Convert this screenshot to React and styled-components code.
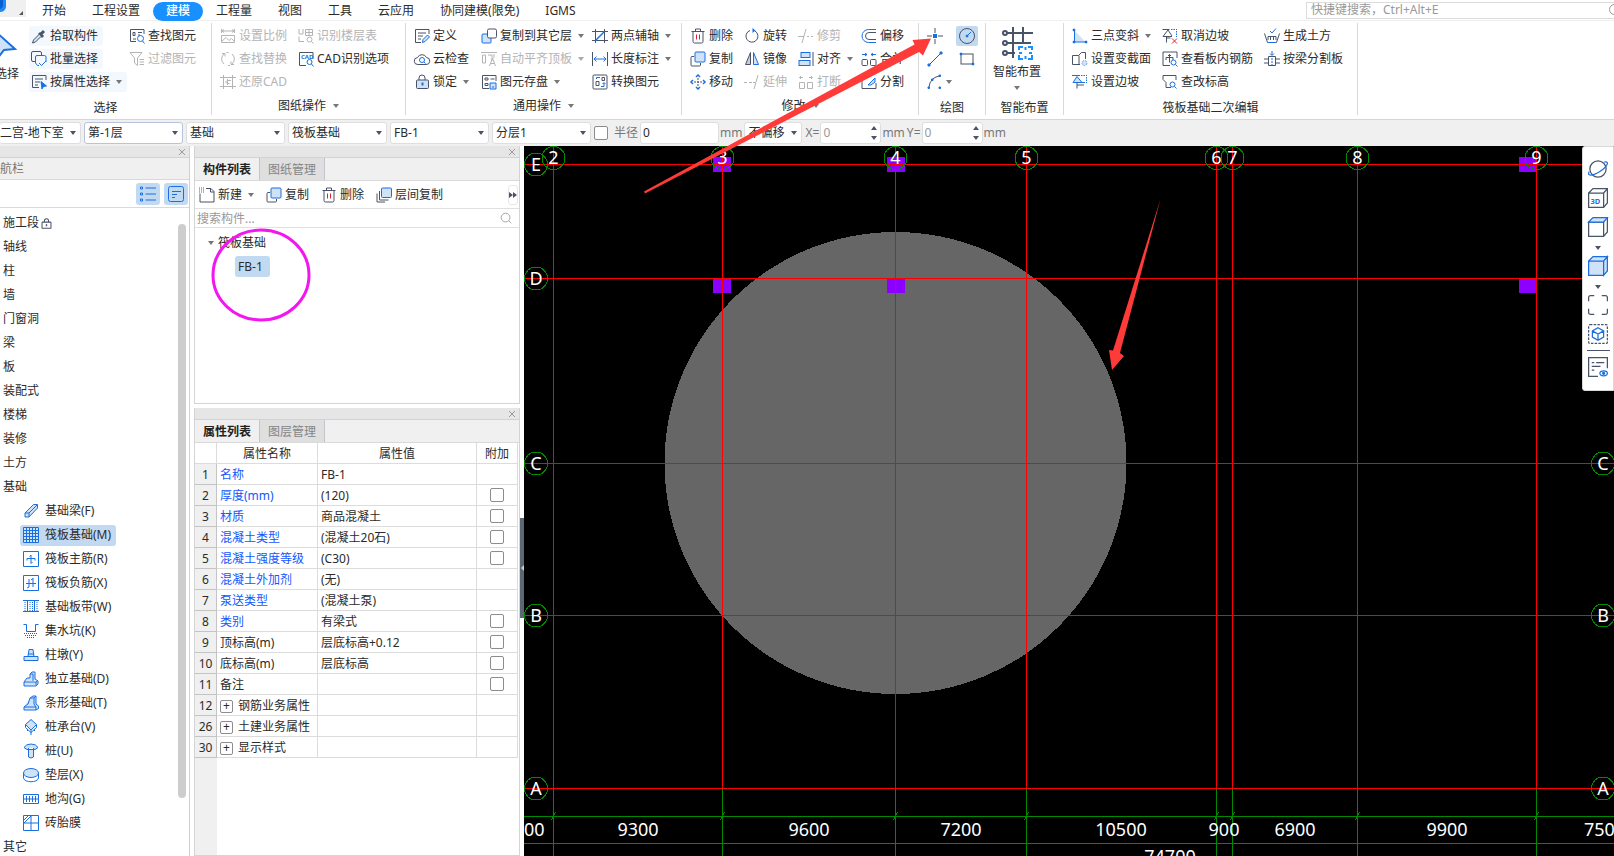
import React, { useState } from "react";
import styled, { createGlobalStyle, css } from "styled-components";

const DARK = "#4a5368";
const BLUE = "#1a6fe0";
const LIGHT = "#cfe2f8";
const GREY = "#b4b4b4";

const GlobalStyle = createGlobalStyle`
  * {
    box-sizing: border-box;
  }
  body {
    margin: 0;
    overflow: hidden;
    background: #fff;
  }
  body, button, input, select, table {
    font-family: "Noto Sans", "Noto Sans CJK SC", sans-serif;
    font-size: 12px;
    line-height: 18px;
    color: #2b2b2b;
  }
`;

/* ---------- icons, all on a 16 x 16 grid ---------- */

const icons = {
  pick: (
    <>
      <path d="M8 5l4 4M9.5 6.5l3.5-3.5" strokeWidth="3" />
      <path d="M8 6.5L2.5 12l-1 3 3-1L10 8.5" stroke={DARK} fill={LIGHT} />
    </>
  ),
  batch: (
    <>
      <path d="M4 10.5H2A1.5 1.5 0 0 1 .5 9V2A1.5 1.5 0 0 1 2 .5h7A1.5 1.5 0 0 1 10.5 2v2" />
      <path d="M8 14.5H6.5L4.5 12V6A1.5 1.5 0 0 1 6 4.5h7.5A1.5 1.5 0 0 1 15 6v5M8 12l2.5 2.5L15 10" stroke={BLUE} />
    </>
  ),
  attr: (
    <>
      <path d="M15 6V1.5H1.5v12H8M4 5h8M4 8h5M4 11h3" />
      <path d="M10 7.5l5.5 4.5-3 .5-1.5 2.5z" fill={BLUE} stroke={BLUE} />
    </>
  ),
  find: (
    <>
      <path d="M15 6V1.5H1.5v12H7M4 4.5h2v3H4zM9 4.5h4M9 7h2M4 11h3" />
      <circle cx="11.5" cy="10.5" r="3" stroke={BLUE} />
      <path d="M13.5 13l2 2.5" stroke={BLUE} />
    </>
  ),
  filter: <path d="M1 1.5h12L8.5 7v7.5L5.5 12V7zM10.5 8.5H15M10.5 11H15M10.5 13.5H15" />,
  scale: <path d="M1.5 1v4M14.5 1v4M1.5 3h13M4 1.5L2 3l2 1.5M12 1.5L14 3l-2 1.5M1.5 7.5h13v7H1.5zM2 13l4-3.5 3 3 2.5-2 3 3" />,
  floorTable: (
    <>
      <path d="M1 1v5h4V1M1 8.5v5h5M7.5 1.5h7v6h-7zM7.5 4.5h7M11 1.5v6" />
      <circle cx="11.5" cy="11.5" r="2.5" />
      <path d="M13.5 13.5l2 2" />
    </>
  ),
  replace: <path d="M4 13A6.5 6.5 0 0 1 4 3M2 2.5h3v3M12 3a6.5 6.5 0 0 1 0 10M14 13.5h-3v-3M6.5 1.5h2M8 14.5h2" />,
  cad: (
    <>
      <path d="M15 8V1.5H1.5v13H8" />
      <text x="3" y="8" fontSize="6" fontWeight="700" fill={BLUE} stroke="none">CAD</text>
      <circle cx="11.5" cy="11" r="2.5" stroke={BLUE} />
      <path d="M13.5 13l2 2.5" stroke={BLUE} />
    </>
  ),
  restore: <path d="M3.5 1v14M12.5 1v14M0 3.5h16M0 12.5h16M11 6.5H7L5.5 8 7 9.5h2.5M7.5 5v6" />,
  define: (
    <>
      <path d="M15 6V1.5H1.5v13H7M4 5h8M4 8h5M4 11h3" />
      <path d="M8.5 14.5l.5-3 4.5-4.5 2 2L11 13.5z" fill={LIGHT} stroke={BLUE} />
    </>
  ),
  cloud: (
    <>
      <path d="M4 13.5A3.5 3.5 0 0 1 3.5 6.5 5 5 0 0 1 12.5 6.5 3.5 3.5 0 0 1 12 13.5z" />
      <circle cx="8" cy="9" r="2.5" stroke={BLUE} />
      <path d="M10 11l1.5 1.5" stroke={BLUE} />
    </>
  ),
  lock: (
    <>
      <path d="M5 6V4a3 3 0 0 1 6 0v2" />
      <rect x="2.5" y="6" width="12" height="8.5" rx="1" fill={LIGHT} />
      <path d="M8.5 8.5v3" stroke={BLUE} strokeWidth="2" />
    </>
  ),
  stageLock: (
    <>
      <path d="M5 6V4a3 3 0 0 1 6 0v2" strokeWidth="1.5" />
      <rect x="1.5" y="6" width="13" height="9" rx="1" fill="#fff" strokeWidth="1.5" />
      <path d="M8 9v3" strokeWidth="2" />
    </>
  ),
  copyLayer: (
    <>
      <rect x="1" y="6" width="9" height="9" rx="1" fill={LIGHT} stroke={BLUE} />
      <rect x="6.5" y="1" width="9" height="9" rx="1.5" fill="#fff" />
    </>
  ),
  alignTop: <path d="M0 1.5h16M1.5 4h3v8h-3zM7 4h4v6M13 3v4M8.5 15l3-8 3 8M10 12.5h3" />,
  store: (
    <>
      <path d="M15 7V1.5H1.5v13H8M4 4h3v2H4zM4 9.5h3v2H4zM9.5 5h4" />
      <path d="M9 9h6v6H9zM11 13h2" fill={LIGHT} stroke={BLUE} />
    </>
  ),
  twoPoint: (
    <>
      <path d="M3.5 1v14M12.5 1v14M0 3.5h16M0 12.5h16" />
      <path d="M3.5 12.5l9-9" stroke={BLUE} strokeWidth="1.5" />
    </>
  ),
  length: (
    <>
      <path d="M.5 1v14M15.5 1v14" />
      <path d="M2 8h12M4.5 5.5L2 8l2.5 2.5M11.5 5.5L14 8l-2.5 2.5" stroke={BLUE} />
    </>
  ),
  convert: (
    <>
      <rect x="1" y="1" width="14" height="14" rx="1" />
      <path d="M4 7.5h3v4H4zM10 3.5h2.5v3H10z" />
      <path d="M4.5 5V3.5H8M9 12.5h3V9M10.5 10L12 8.5l1.5 1.5" stroke={BLUE} />
    </>
  ),
  trash: (
    <>
      <path d="M1.5 3.5h13M5.5 3V1h5v2M3 4v9.5A1.5 1.5 0 0 0 4.5 15h7a1.5 1.5 0 0 0 1.5-1.5V4" />
      <path d="M6.5 6.5v5M9.5 6.5v5" stroke="#d9262c" />
    </>
  ),
  copy: (
    <>
      <path d="M4 5.5H2A1 1 0 0 0 1 6.5V14a1 1 0 0 0 1 1h7.5a1 1 0 0 0 1-1v-2" />
      <rect x="5" y="1" width="10" height="10" rx="1" fill={LIGHT} stroke={BLUE} />
    </>
  ),
  copyFloors: (
    <>
      <path d="M3.5 4v9h9M1 6.5V15h8" />
      <rect x="5.5" y="1" width="10" height="9.5" rx="1" fill={LIGHT} stroke={BLUE} />
    </>
  ),
  move: (
    <>
      <path d="M8 4v8M4 8h8" strokeDasharray="2 1" />
      <path d="M6 3l2-2 2 2M6 13l2 2 2-2M3 6L1 8l2 2M13 6l2 2-2 2" stroke={BLUE} strokeWidth="1.5" />
    </>
  ),
  rotate: (
    <>
      <path d="M6 2.5A6 6 0 1 0 11 3" />
      <path d="M8.5 0l3 2.5-3 2.5z" fill={BLUE} stroke="none" />
    </>
  ),
  mirror: (
    <>
      <path d="M6.5 1.5v12h-5z" fill="#ccc" />
      <path d="M9.5 1.5v12h5z" fill={LIGHT} stroke={BLUE} />
    </>
  ),
  trim: <path d="M0 8.5h6M4 15L8 1M9 8.5h2M13 8.5h2" />,
  extend: <path d="M0 8.5h3M5 8.5h3M9 8.5h2M10 15l4-14" />,
  align: (
    <>
      <path d="M15 1v14" />
      <rect x="3" y="1.5" width="9" height="5" fill={LIGHT} stroke={BLUE} />
      <rect x="1" y="9.5" width="11" height="5" fill={LIGHT} stroke={BLUE} />
    </>
  ),
  split2: <path d="M1.5 8.5h5v6h-5zM9.5 8.5h5v6h-5zM5 3.5H1.5M3 2L1.5 3.5 3 5M11 3.5h3.5M13 2l1.5 1.5L13 5" />,
  offset: (
    <>
      <path d="M15 4.5H8a3.5 3.5 0 0 0 0 7h7" />
      <path d="M15 1.5H7.5a6.5 6.5 0 0 0 0 13H15" stroke={BLUE} />
    </>
  ),
  merge: (
    <>
      <rect x="1" y="8.5" width="5.5" height="6" rx="1" />
      <rect x="9.5" y="8.5" width="5.5" height="6" rx="1" />
      <path d="M1 3.5h5M4 2l2 1.5L4 5M15 3.5h-5M12 2l-2 1.5L12 5" stroke={BLUE} />
    </>
  ),
  divide: (
    <>
      <path d="M8 3.5H1v11h14V9" />
      <path d="M7 11l7-7v4l-4 3z" fill={LIGHT} stroke={BLUE} />
    </>
  ),
  point: (
    <>
      <path d="M8 0v5M8 11v5M0 8h5M11 8h5" />
      <rect x="6" y="6" width="4" height="4" fill={BLUE} stroke="none" />
    </>
  ),
  circle: (
    <>
      <circle cx="8" cy="8" r="7.5" />
      <path d="M8 8l4-4" stroke={BLUE} />
      <circle cx="8" cy="8" r="1" fill={BLUE} stroke={BLUE} />
    </>
  ),
  line: (
    <>
      <path d="M3 13L13 3" />
      <path d="M1 13h2v2H1zM13 1h2v2h-2z" fill={BLUE} stroke={BLUE} />
    </>
  ),
  rect: (
    <>
      <rect x="2" y="3" width="12" height="10" />
      <path d="M1 2h2v2H1zM13 12h2v2h-2z" fill={BLUE} stroke={BLUE} strokeWidth=".5" />
    </>
  ),
  arc: (
    <>
      <path d="M2 13Q3 4 12 2" />
      <path d="M1 13h1.5v1.5H1zM4.5 5H6v1.5H4.5zM12 1h1.5v1.5H12zM12 13h1.5v1.5H12z" fill={BLUE} stroke={BLUE} />
    </>
  ),
  slope: (
    <>
      <path d="M2.5 2.5L13.5 14h-11z" fill={LIGHT} stroke="none" />
      <path d="M2.5 3v11H14" stroke={BLUE} />
      <path d="M1 1h2v2H1zM1 13h2v2H1zM13 13h2v2h-2z" fill={BLUE} stroke={BLUE} strokeWidth=".5" />
    </>
  ),
  section: (
    <>
      <path d="M.5 13.5v-9h6l3-3h4V8M.5 13.5H8M7 4.5v9" />
      <circle cx="12.5" cy="12" r="2.5" fill={LIGHT} stroke="#7aaeea" strokeDasharray="2 1" />
    </>
  ),
  pitSlope: (
    <>
      <path d="M1 8.5l4-6 5 6z" fill={LIGHT} stroke={BLUE} />
      <path d="M0 1.5h8M1 8.5h12" stroke={BLUE} />
      <path d="M9 1.5h6M14.5 3v6" stroke={BLUE} strokeDasharray="1.5 1" />
      <path d="M5 8.5v6M5 11h7" />
    </>
  ),
  cancelSlope: (
    <>
      <path d="M.5 1.5h7M1 8.5l5-6.5 4 6M4.5 8.5v6M4.5 10h4M1 8.5h9" />
      <path d="M9 1.5h6M14.5 3v6" stroke={BLUE} strokeDasharray="1.5 1" />
      <path d="M10 10.5l5 5M15 10.5l-5 5" stroke="#d9262c" />
    </>
  ),
  viewBar: (
    <>
      <path d="M15 7V1H1v13.5h7M4 9V6.5h7V9M7.5 3.5v8M6 5l1.5-1.5L9 5" />
      <circle cx="11.5" cy="11.5" r="2.5" fill="#fff" stroke={BLUE} />
      <path d="M13.5 13.5l2 2" stroke={BLUE} />
    </>
  ),
  elevation: (
    <>
      <path d="M14 6V1.5H1v4l3 3v5h5" />
      <circle cx="10.5" cy="10.5" r="2.5" stroke={BLUE} />
      <path d="M12.5 12.5l2 2" stroke={BLUE} />
    </>
  ),
  earth: (
    <>
      <path d="M.5 5.5l3 9h9l3-9M4 12V8.5h8V12M6.5 9v3M9.500 9v3" />
      <path d="M4 14.5h8M6 3l2 2 4-4.5" stroke={BLUE} />
    </>
  ),
  beamSplit: (
    <>
      <path d="M0 8h4M0 12h4M12 8h4M12 12h4M4.5 5.5h7v9h-7z" />
      <path d="M8 0v4M6 2.5l2 2 2-2" stroke={BLUE} />
      <path d="M8 7v7" stroke={BLUE} strokeDasharray="2 1" />
    </>
  ),
  fresh: (
    <>
      <path d="M7 1.5h5l3 3V15H1V6.5M11.5 1.5V5H15" />
      <path d="M0 1h5M0 3h5M0 5h5" stroke={BLUE} strokeDasharray="1 1" />
    </>
  ),
  list: (
    <>
      <path d="M.5 1h2v2h-2zM.5 7h2v2h-2zM.5 13h2v2h-2z" />
      <path d="M5.5 2H16M5.5 8H16M5.5 14H16" />
    </>
  ),
  card: (
    <>
      <rect x=".5" y=".5" width="15" height="15" rx="2" />
      <path d="M4 5.5h9M4 8.5h5M4 11.5h3" />
    </>
  ),
  beam: <path d="M2 10L10.5 1.5h4v3.5L6 14H2zM2 10h4v4M6 10l8-8" fill={LIGHT} />,
  raft: (
    <>
      <path d="M.5.5h15v15H.5zM3.5 3.5h9v9h-9z" fill={LIGHT} />
      <path d="M.5 6.5h15M.5 9.5h15M6.5.5v15M9.5.5v15M3.5.5v3M12.5.5v3M3.5 12.5v3M12.5 12.5v3M.5 3.5h3M12.5 3.5h3M.5 12.5h3M12.5 12.5h3" />
    </>
  ),
  mainBar: <path d="M.5.5h15v15H.5zM4 9.5V7.5h8v2M8 4v8.5M6.5 5.500L8 4M8 12.5l1.5-1.500" />,
  negBar: <path d="M.5.5h15v15H.5zM3 8.5h10M6 4v8l-2 1M10 3v9M8 5l2-1.5" />,
  strip: (
    <>
      <path d="M0 1.5h16M0 12.5h16M4.5 2v11M11.5 2v11" />
      <path d="M2 3v9M7 3v9M9.500 3v9M14 3v9" strokeDasharray="1 1" />
    </>
  ),
  sump: (
    <>
      <path d="M.5 1.5h3v7h9v-7h3" />
      <path d="M1 10.5h14M2 12.5h12M4 14.5h8" stroke="#555" strokeDasharray="1 1" />
    </>
  ),
  pier: <path d="M1 9.5h14v4H1zM5 9.5l1-7h4l1 7M5 7h6" fill={LIGHT} />,
  footing: <path d="M1 11l3-4h3V3l2-2h3v7l3 2v3l-2 2H1zM7 3h3v7M1 11h12l2-2M13 11v3" fill={LIGHT} />,
  stripFooting: <path d="M1 12l4-3 2-6 3-2h3v8l2.5 2v2.5L13 15H1zM7 3h4v6l2 3H1M11 3l2-2M13 12v3" fill={LIGHT} />,
  cap: (
    <>
      <path d="M8 .5l5.5 5L8 11 2.5 5.5z" fill={LIGHT} />
      <path d="M2.500 5.500v3L8 13.500l5.500-5v-3M8 11v5M4.500 10v2M11.500 10v2" />
    </>
  ),
  pile: <path d="M1 4.5Q3 1 8 1t7 3.5l-3 2H4zM5.5 5v9q2.5 2 5 0V5" fill={LIGHT} />,
  cushion: (
    <>
      <path d="M.5 6v5c1 5 14 5 15 0V6" />
      <ellipse cx="8" cy="6" rx="7.5" ry="4.5" fill={LIGHT} />
    </>
  ),
  trench: <path d="M.5 3.5h15v9H.5zM0 8h16M3.5 5v6M6.5 5v6M9.5 5v6M12.5 5v6" />,
  brick: <path d="M.5.5h15v15H.5zM8 .5v15M.5 8h15M1 5l4-4M1 8l7-7" />,
  orbit: (
    <>
      <circle cx="8" cy="8" r="6.5" />
      <path d="M13 2.5c5-1 2 4-3.5 7.5s-11 4-8.5 0" stroke={BLUE} />
    </>
  ),
  cube3d: (
    <>
      <path d="M.5 4h12v11.5H.5zM.5 4L4 .5h11.5V12l-3 3.5M12.5 4l3-3.5" />
      <text x="2" y="13" fontSize="6" fontWeight="700" fill={BLUE} stroke="none">3D</text>
    </>
  ),
  cubeTop: (
    <>
      <path d="M.5 4h12v11.5H.5zM15.5 .5V12l-3 3.5" />
      <path d="M.5 4L4 .5h11.5L12.5 4z" fill={LIGHT} stroke={BLUE} />
    </>
  ),
  cubeFull: <path d="M.5 4h12v11.5H.5zM.5 4L4 .5h11.5L12.5 4M12.5 4l3-3.5V12l-3 3.5z" fill={LIGHT} stroke={BLUE} />,
  extents: <path d="M.5 5V2A1.5 1.5 0 0 1 2 .5h3M11 .5h3A1.5 1.5 0 0 1 15.5 2v3M15.5 11v3a1.5 1.5 0 0 1-1.5 1.5h-3M5 15.5H2A1.5 1.5 0 0 1 .5 14v-3" />,
  isolate: (
    <>
      <rect x=".5" y=".5" width="15" height="15" rx="1" strokeDasharray="2 1" />
      <path d="M8 3l4.5 2.5v5L8 13l-4.5-2.5v-5zM3.5 5.5L8 8l4.5-2.5M8 8v5" stroke={BLUE} />
    </>
  ),
  display: (
    <>
      <path d="M15.5 9V.5H.5v15H8M3 4.5h2M6.5 4.5H13M3 7.5h7M3 10.5h2" />
      <ellipse cx="12.5" cy="13" rx="3" ry="2" stroke={BLUE} />
      <circle cx="12.5" cy="13" r=".8" fill={BLUE} stroke={BLUE} />
    </>
  ),
  search: (
    <>
      <circle cx="7.5" cy="7.5" r="5" />
      <path d="M11 11l3 3" />
    </>
  ),
};

const Svg = styled.svg`
  flex: none;
  width: ${(p) => p.$size}px;
  height: ${(p) => p.$size}px;
  overflow: visible;
`;

/* disabled icons are flattened to one grey */
const GreySvg = styled(Svg)`
  * {
    stroke: ${GREY};
    fill: none;
  }
`;

function Icon({ name, size = 16, color = DARK, disabled }) {
  const Tag = disabled ? GreySvg : Svg;
  return (
    <Tag $size={size} viewBox="0 0 16 16" fill="none" stroke={color} aria-hidden="true">
      {icons[name]}
    </Tag>
  );
}

const Caret = styled.i`
  flex: none;
  border: 3px solid transparent;
  border-top: 4px solid ${(p) => p.$color || "#777"};
  border-bottom: 0;
`;

/* ---------- page ---------- */

const Page = styled.div`
  position: relative;
  display: flex;
  flex-direction: column;
  height: 100vh;
  overflow: hidden;
`;

const PlainButton = styled.button`
  display: flex;
  align-items: center;
  padding: 0;
  border: none;
  background: none;
  white-space: nowrap;
  cursor: pointer;
`;

const MenuBar = styled.header`
  display: flex;
  align-items: center;
  flex: none;
  height: 21px;
  border-bottom: 1px solid #f0f0f0;
`;

const AppButton = styled(PlainButton)`
  align-self: flex-start;
  align-items: flex-end;
  justify-content: space-between;
  width: 26px;
  height: 17px;
  margin-right: 3px;
  background: #f0f0f0;
`;

const MenuTab = styled(PlainButton)`
  height: 19px;
  margin-top: 2px;
  padding: 0 13px;
  border-radius: 10px;
  ${(p) =>
    p.$active &&
    css`
      background: #1890ff;
      color: #fff;
      font-weight: 500;
    `}
`;

const MenuSearch = styled.label`
  display: flex;
  align-items: center;
  width: 308px;
  height: 17px;
  margin-left: auto;
  overflow: hidden;
  border: 1px solid #dcdcdc;
  border-right: none;
  input {
    flex: none;
    width: 300px;
    padding: 0 4px;
    border: none;
    outline: none;
    background: none;
  }
  input::placeholder {
    color: #999;
  }
`;

const Ribbon = styled.div`
  display: flex;
  flex: none;
  height: 99px;
  padding: 2px 0 4px;
  border-bottom: 1px solid #d6d6d6;
`;

const Group = styled.section`
  display: flex;
  flex: none;
  flex-direction: column;
  width: ${(p) => p.$w}px;
  border-right: 1px solid #d9d9d9;
`;

const GroupBody = styled.div`
  display: grid;
  grid-template-columns: ${(p) => p.$cols};
  grid-template-rows: repeat(3, 23px);
  grid-auto-flow: column;
  align-items: center;
  padding: 1px 0 0 ${(p) => (p.$flush ? 0 : 8)}px;
`;

const GroupTitle = styled.div`
  display: flex;
  align-items: center;
  justify-content: center;
  gap: 7px;
  flex: none;
  margin-top: ${(p) => (p.$more ? 4 : 6)}px;
`;

const ToolButton = styled(PlainButton)`
  justify-self: start;
  gap: 3px;
  height: 20px;
  color: ${(p) => (p.disabled ? GREY : "#2b2b2b")};
  ${Caret} {
    margin-left: 3px;
  }
  ${(p) =>
    p.$hot &&
    css`
      margin-left: -2px;
      padding: 0 5px 0 2px;
      border-radius: 3px;
      background: #f2f8fe;
    `}
`;

const DrawButton = styled(ToolButton)`
  justify-content: center;
  ${Caret} {
    margin-left: 0;
  }
  ${(p) =>
    p.$on &&
    css`
      padding: 0 3px;
      margin-left: -3px;
      border-radius: 2px;
      background: #c2d9f2;
    `}
`;

const BigButton = styled(PlainButton)`
  grid-row: 1 / 4;
  flex-direction: column;
  align-self: start;
  justify-self: ${(p) => (p.$clipped ? "end" : "center")};
  gap: 2px;
  padding-top: 3px;
  ${Caret} {
    margin-top: 3px;
  }
`;

const OptionBar = styled.div`
  display: flex;
  align-items: center;
  flex: none;
  height: 26px;
  padding-bottom: 1px;
  background: #f0f0f0;
  color: #777;
`;

const Combo = styled.div`
  position: relative;
  width: ${(p) => p.$w || 99}px;
  margin-right: 3px;
  select {
    width: 100%;
    height: 22px;
    padding: 0 3px;
    border: 1px solid ${(p) => (p.$focus ? "#b9c3dc" : "#dedede")};
    border-radius: 3px;
    outline: none;
    background: #fff;
    appearance: none;
  }
  ${Caret} {
    position: absolute;
    top: 9px;
    right: 5px;
    pointer-events: none;
  }
`;

const ClippedCombo = styled(Combo)`
  select {
    padding: 0;
    border-left: none;
  }
`;

const Check = styled.input.attrs({ type: "checkbox" })`
  display: block;
  width: 14px;
  height: 14px;
  margin: 0 auto;
  border: 1px solid #8c8c8c;
  border-radius: 2px;
  background: #fff;
  appearance: none;
  &:checked {
    background: ${BLUE};
  }
`;

const OptionLabel = styled.label`
  display: flex;
  align-items: center;
  gap: ${(p) => p.$gap || 0}px;
  margin-right: 2px;
`;

const NumberBox = styled.span`
  position: relative;
  display: flex;
  width: ${(p) => p.$w}px;
  input {
    width: 100%;
    height: 22px;
    padding: 0 2px;
    border: 1px solid #dedede;
    border-radius: 3px;
    outline: none;
    background: #fff;
    color: ${(p) => (p.$dim ? "#999" : "#2b2b2b")};
  }
`;

const Spin = styled.span`
  position: absolute;
  top: 4px;
  right: 4px;
  display: flex;
  flex-direction: column;
  gap: 6px;
  ${Caret}:first-child {
    transform: rotate(180deg);
  }
`;

const Main = styled.main`
  display: flex;
  flex: 1;
  min-height: 0;
`;

const Nav = styled.nav`
  display: flex;
  flex: none;
  flex-direction: column;
  width: 190px;
  border-right: 1px solid #cfcfcf;
`;

const PanelHead = styled.div`
  display: flex;
  align-items: center;
  justify-content: flex-end;
  flex: none;
  height: 12px;
  padding-right: 3px;
  border-bottom: 1px solid #d2d2d2;
  background: #e6e6e6;
`;

const NavTitle = styled.div`
  flex: none;
  height: 22px;
  border-bottom: 1px solid #d9d9d9;
  background: #f0f0f0;
  color: #777;
  line-height: 22px;
`;

const NavTools = styled.div`
  display: flex;
  flex: none;
  align-items: center;
  justify-content: flex-end;
  gap: 4px;
  height: 28px;
  padding-right: 1px;
  border-bottom: 1px solid #d9d9d9;
`;

const NavTool = styled(PlainButton)`
  justify-content: center;
  width: 24px;
  height: 22px;
  border-radius: 3px;
  background: #c2d9f2;
`;

const NavScroll = styled.div`
  display: flex;
  flex: 1;
  min-height: 0;
  padding: 3px 3px 0 0;
`;

const NavList = styled.ul`
  flex: 1;
  margin: 0;
  padding: 0;
  overflow: hidden;
  list-style: none;
  li {
    display: flex;
    align-items: center;
    height: 24px;
  }
`;

const NavRoot = styled(PlainButton)`
  gap: 2px;
  padding-left: 3px;
`;

const NavChild = styled(PlainButton)`
  gap: 6px;
  height: 21px;
  margin-left: 20px;
  padding: 0 5px 0 3px;
  border-radius: 3px;
  background: ${(p) => (p.$active ? "#c2d9f2" : "none")};
`;

const ScrollThumb = styled.div`
  width: 8px;
  height: 89%;
  margin-top: 13px;
  border-radius: 4px;
  background: #cdcdcd;
`;

const Side = styled.div`
  display: flex;
  flex: none;
  flex-direction: column;
  gap: 4px;
  width: 326px;
  margin-left: 4px;
`;

const Panel = styled.section`
  display: flex;
  flex-direction: column;
  flex: ${(p) => (p.$grow ? "1" : "none")};
  height: ${(p) => (p.$grow ? "auto" : "258px")};
  min-height: 0;
  border: 1px solid #d4d4d4;
  border-width: 0 1px 1px;
`;

const Tabs = styled.div`
  display: flex;
  flex: none;
  height: 23px;
  border-bottom: 1px solid #d9d9d9;
  background: #f0f0f0;
`;

const Tab = styled(PlainButton)`
  justify-content: center;
  width: 65px;
  padding-top: 1px;
  border-right: 1px solid #c4c4cc;
  background: ${(p) => (p.$active ? "#f0f0f0" : "#dfdfdf")};
  color: ${(p) => (p.$active ? "#222" : "#858585")};
  font-weight: ${(p) => (p.$active ? 600 : 400)};
`;

const PanelTools = styled.div`
  display: flex;
  flex: none;
  align-items: center;
  gap: 12px;
  height: 28px;
  padding: 1px 1px 0 4px;
  border-bottom: 1px solid #e0e0e0;
`;

const MoreButton = styled(PlainButton)`
  justify-content: center;
  width: 10px;
  height: 20px;
  margin-left: auto;
  border: 1px solid #e8e8e8;
  border-radius: 3px;
`;

const PanelSearch = styled.label`
  display: flex;
  flex: none;
  align-items: center;
  height: 19px;
  padding: 0 6px 0 2px;
  border-bottom: 1px solid #e0e0e0;
  input {
    flex: 1;
    height: 18px;
    padding: 1px 0 0;
    border: none;
    outline: none;
    background: none;
  }
  input::placeholder {
    color: #999;
  }
`;

const Tree = styled.div`
  display: flex;
  flex-direction: column;
  align-items: flex-start;
  gap: 3px;
  padding: 4px 0 0 13px;
`;

const TreeRoot = styled(PlainButton)`
  gap: 4px;
  height: 21px;
`;

const TreeLeaf = styled(PlainButton)`
  height: 21px;
  margin-left: 27px;
  padding: 0 7px 0 3px;
  border-radius: 3px;
  background: #c2d9f2;
`;

const TableArea = styled.div`
  flex: 1;
  min-height: 0;
  padding-right: 1px;
  overflow: hidden;
  background: linear-gradient(to right, #f0f0f0 22px, #fff 22px);
`;

const Table = styled.table`
  width: 100%;
  table-layout: fixed;
  border-collapse: separate;
  border-spacing: 0;
  background: #fff;
  th,
  td {
    height: 21px;
    padding: 2px 3px 0;
    border: 1px solid #dcdcdc;
    border-width: 0 1px 1px 0;
    font-weight: 400;
    line-height: 18px;
    text-align: left;
    white-space: nowrap;
  }
  td:last-child {
    padding: 0 3px;
  }
  thead th {
    text-align: center;
  }
  tbody th {
    padding: 2px 0 0;
    border-color: #c4c4c4;
    background: #f0f0f0;
    text-align: center;
  }
`;

const NameCell = styled.td`
  color: ${(p) => (p.$blue ? "#1257ff" : "#2b2b2b")};
`;

const ExpandLabel = styled.span`
  display: flex;
  align-items: center;
  gap: 5px;
`;

const Expand = styled(PlainButton)`
  justify-content: center;
  width: 13px;
  height: 13px;
  border: 1px solid #8c8c8c;
  border-radius: 2px;
  line-height: 10px;
`;

const Splitter = styled.div`
  flex: none;
  width: 4px;
  padding-top: 372px;
`;

const SplitHandle = styled(PlainButton)`
  justify-content: flex-end;
  width: 4px;
  height: 100px;
  background: #5b6773;
  &::after {
    content: "";
    border: 3px solid transparent;
    border-right-color: #ccc;
    border-left: 0;
  }
`;

const Viewport = styled.div`
  position: relative;
  flex: 1;
  min-width: 0;
  overflow: hidden;
  background: #000;
`;

const Drawing = styled.svg`
  display: block;
  width: 100%;
  height: 100%;
  shape-rendering: crispEdges;
  text {
    fill: #fff;
    font-size: 18px;
  }
`;

const ViewTools = styled.div`
  position: absolute;
  top: 0;
  right: 0;
  display: flex;
  flex-direction: column;
  align-items: center;
  width: 32px;
  padding: 12px 0 7px;
  border: 1px solid #d9d9d9;
  border-radius: 3px 0 0 3px;
  background: #fff;
  ${Caret} {
    margin: 0 0 6px;
  }
  hr {
    width: 23px;
    margin: 0 0 6px;
    border: none;
    border-top: 1px solid ${DARK};
  }
`;

const ViewTool = styled(PlainButton)`
  height: 20px;
  margin-bottom: ${(p) => (p.$tight ? 6 : 9)}px;
`;

const Marks = styled.svg`
  position: absolute;
  inset: 0;
  width: 100%;
  height: 100%;
  pointer-events: none;
`;

/* ---------- data ---------- */

const menuTabs = ["开始", "工程设置", "建模", "工程量", "视图", "工具", "云应用", "协同建模(限免)", "IGMS"];

// tools run down each column, three per column
const groups = {
  drawings: {
    title: "图纸操作",
    w: 194,
    cols: "78px 1fr",
    tools: [
      { icon: "scale", text: "设置比例", off: true },
      { icon: "replace", text: "查找替换", off: true },
      { icon: "restore", text: "还原CAD", off: true },
      { icon: "floorTable", text: "识别楼层表", off: true },
      { icon: "cad", text: "CAD识别选项" },
    ],
    more: true,
  },
  common: {
    title: "通用操作",
    w: 276,
    cols: "67px 111px 1fr",
    tools: [
      { icon: "define", text: "定义" },
      { icon: "cloud", text: "云检查" },
      { icon: "lock", text: "锁定", drop: true },
      { icon: "copyLayer", text: "复制到其它层", drop: true },
      { icon: "alignTop", text: "自动平齐顶板", drop: true, off: true },
      { icon: "store", text: "图元存盘", drop: true },
      { icon: "twoPoint", text: "两点辅轴", drop: true },
      { icon: "length", text: "长度标注", drop: true },
      { icon: "convert", text: "转换图元" },
    ],
    more: true,
  },
  modify: {
    title: "修改",
    w: 237,
    cols: "54px 54px 63px 1fr",
    tools: [
      { icon: "trash", text: "删除" },
      { icon: "copy", text: "复制" },
      { icon: "move", text: "移动" },
      { icon: "rotate", text: "旋转" },
      { icon: "mirror", text: "镜像" },
      { icon: "extend", text: "延伸", off: true },
      { icon: "trim", text: "修剪", off: true },
      { icon: "align", text: "对齐", drop: true },
      { icon: "split2", text: "打断", off: true },
      { icon: "offset", text: "偏移" },
      { icon: "merge", text: "合并" },
      { icon: "divide", text: "分割" },
    ],
    more: true,
  },
  raft: {
    title: "筏板基础二次编辑",
    w: 294,
    cols: "90px 102px 1fr",
    tools: [
      { icon: "slope", text: "三点变斜", drop: true },
      { icon: "section", text: "设置变截面" },
      { icon: "pitSlope", text: "设置边坡" },
      { icon: "cancelSlope", text: "取消边坡" },
      { icon: "viewBar", text: "查看板内钢筋" },
      { icon: "elevation", text: "查改标高" },
      { icon: "earth", text: "生成土方" },
      { icon: "beamSplit", text: "按梁分割板" },
    ],
  },
};

const navRoots = ["施工段", "轴线", "柱", "墙", "门窗洞", "梁", "板", "装配式", "楼梯", "装修", "土方", "基础"];

const navChildren = [
  ["beam", "基础梁(F)"],
  ["raft", "筏板基础(M)"],
  ["mainBar", "筏板主筋(R)"],
  ["negBar", "筏板负筋(X)"],
  ["strip", "基础板带(W)"],
  ["sump", "集水坑(K)"],
  ["pier", "柱墩(Y)"],
  ["footing", "独立基础(D)"],
  ["stripFooting", "条形基础(T)"],
  ["cap", "桩承台(V)"],
  ["pile", "桩(U)"],
  ["cushion", "垫层(X)"],
  ["trench", "地沟(G)"],
  ["brick", "砖胎膜"],
];

const properties = [
  { no: 1, name: "名称", value: "FB-1", blue: true },
  { no: 2, name: "厚度(mm)", value: "(120)", blue: true, check: true },
  { no: 3, name: "材质", value: "商品混凝土", blue: true, check: true },
  { no: 4, name: "混凝土类型", value: "(混凝土20石)", blue: true, check: true },
  { no: 5, name: "混凝土强度等级", value: "(C30)", blue: true, check: true },
  { no: 6, name: "混凝土外加剂", value: "(无)", blue: true },
  { no: 7, name: "泵送类型", value: "(混凝土泵)", blue: true },
  { no: 8, name: "类别", value: "有梁式", blue: true, check: true },
  { no: 9, name: "顶标高(m)", value: "层底标高+0.12", check: true },
  { no: 10, name: "底标高(m)", value: "层底标高", check: true },
  { no: 11, name: "备注", value: "", check: true },
  { no: 12, name: "钢筋业务属性", group: true },
  { no: 26, name: "土建业务属性", group: true },
  { no: 30, name: "显示样式", group: true },
];

// grid axes, in drawing units from the viewport corner
const axesX = [
  ["2", 29.5],
  ["3", 198.5],
  ["4", 371.5],
  ["5", 502.5],
  ["6", 692.5],
  ["7", 708.5],
  ["8", 833.5],
  ["9", 1012.5],
];
const axesY = [
  ["E", 18.5],
  ["D", 132.5],
  ["C", 317.5],
  ["B", 469.5],
  ["A", 642.5],
];
const spans = [
  ["9300", 114],
  ["9600", 285],
  ["7200", 437],
  ["10500", 597],
  ["900", 700],
  ["6900", 771],
  ["9900", 923],
];
const columns = [
  [189, 11, 18, 15],
  [363, 11, 18, 15],
  [995, 11, 17, 15],
  [189, 133, 18, 14],
  [363, 133, 18, 14],
  [995, 133, 17, 14],
];

/* ---------- parts ---------- */

function Tool({ tool }) {
  return (
    <ToolButton type="button" disabled={tool.off} $hot={tool.hot}>
      <Icon name={tool.icon} disabled={tool.off} />
      {tool.text}
      {tool.drop && <Caret $color={tool.off ? "#aaa" : "#777"} />}
    </ToolButton>
  );
}

function ToolGroup({ group }) {
  return (
    <Group $w={group.w}>
      <GroupBody $cols={group.cols}>
        {group.tools.map((tool) => (
          <Tool key={tool.text} tool={tool} />
        ))}
      </GroupBody>
      <GroupTitle $more={group.more}>
        {group.title}
        {group.more && <Caret />}
      </GroupTitle>
    </Group>
  );
}

function Close() {
  return (
    <PlainButton type="button" aria-label="关闭">
      <svg width="8" height="8" stroke="#999">
        <path d="M1 1l6 6M7 1L1 7" />
      </svg>
    </PlainButton>
  );
}

function Select({ label, value, focus, w }) {
  return (
    <Combo $focus={focus} $w={w}>
      <select aria-label={label} defaultValue={value}>
        <option>{value}</option>
      </select>
      <Caret $color={DARK} />
    </Combo>
  );
}

function Spinner({ label }) {
  return (
    <OptionLabel $gap={1}>
      {label}=
      <NumberBox $w={61} $dim>
        <input type="text" defaultValue="0" />
        <Spin>
          <Caret $color={DARK} />
          <Caret $color={DARK} />
        </Spin>
      </NumberBox>
      mm
    </OptionLabel>
  );
}

function Bubble({ x, y, text }) {
  return (
    <g>
      <circle cx={x} cy={y} r="11.5" fill="none" stroke="#008a00" />
      <text x={x} y={y + 6} textAnchor="middle">
        {text}
      </text>
    </g>
  );
}

function Plan() {
  return (
    <Drawing>
      <circle cx="371.5" cy="317" r="231" fill="#666" />
      {columns.map(([x, y, w, h]) => (
        <rect key={`${x}-${y}`} x={x} y={y} width={w} height={h} fill="#8b00ff" />
      ))}
      <g stroke="#008a00">
        <path d="M0 670.5H4000M0 697.5H4000" />
        {axesX.map(([name, x]) => (
          <path key={name} d={`M${x} 642V4000M${x - 2} 674l4-8`} />
        ))}
      </g>
      <g stroke="#f00">
        {axesX.map(([name, x]) => (
          <path key={name} d={`M${x} 1V642`} />
        ))}
        {axesY.map(([name, y]) => (
          <path key={name} d={`M1 ${y}H4000`} />
        ))}
      </g>
      {axesX.map(([name, x]) => (
        <Bubble key={name} x={x} y={12} text={name} />
      ))}
      {axesY.map(([name, y]) => (
        <Bubble key={name} x={12} y={y} text={name} />
      ))}
      {axesY.slice(2).map(([name, y]) => (
        <Bubble key={name} x={1079} y={y} text={name} />
      ))}
      {spans.map(([text, x]) => (
        <text key={text} x={x} y="690" textAnchor="middle">
          {text}
        </text>
      ))}
      <text x="0" y="690">00</text>
      <text x="1060" y="690">750</text>
      <text x="646" y="717" textAnchor="middle">74700</text>
    </Drawing>
  );
}

function PropertyTable() {
  return (
    <Table>
      <colgroup>
        <col width="22" />
        <col width="101" />
        <col />
        <col width="41" />
      </colgroup>
      <thead>
        <tr>
          <th></th>
          <th>属性名称</th>
          <th>属性值</th>
          <th>附加</th>
        </tr>
      </thead>
      <tbody>
        {properties.map((row) => (
          <tr key={row.no}>
            <th>{row.no}</th>
            <NameCell $blue={row.blue}>
              {row.group ? (
                <ExpandLabel>
                  <Expand type="button">+</Expand>
                  {row.name}
                </ExpandLabel>
              ) : (
                row.name
              )}
            </NameCell>
            <td>{row.value}</td>
            <td>{row.check && <Check aria-label={row.name} />}</td>
          </tr>
        ))}
      </tbody>
    </Table>
  );
}

function App() {
  const [menu, setMenu] = useState("建模");
  const [current, setCurrent] = useState("筏板基础(M)");

  return (
    <>
      <GlobalStyle />
      <Page>
        <MenuBar>
          <AppButton type="button" aria-label="菜单">
            <svg width="7" height="17">
              <path d="M0 0h6v7q-1 5-6 5z" fill="#1b8cf5" />
              <path d="M0 0h3v6q-1 3-3 3z" fill="#0a5fd0" />
            </svg>
            <svg width="7" height="6">
              <path d="M4 0v4H0z" fill="#555" />
            </svg>
          </AppButton>
          {menuTabs.map((tab) => (
            <MenuTab key={tab} type="button" $active={tab === menu} onClick={() => setMenu(tab)}>
              {tab}
            </MenuTab>
          ))}
          <MenuSearch>
            <input type="text" placeholder="快捷键搜索，Ctrl+Alt+E" aria-label="快捷键搜索" />
            <Icon name="search" color="#999" />
          </MenuSearch>
        </MenuBar>

        <Ribbon>
          <Group $w={212}>
            <GroupBody $flush $cols="19px 12px 98px 1fr">
              <BigButton type="button" $clipped>
                <svg width="24" height="36" viewBox="0 0 24 36">
                  <path d="M0 4L20 22 9 23 2 32z" fill={LIGHT} stroke={BLUE} strokeWidth="2" />
                </svg>
                选择
              </BigButton>
              <span style={{ gridRow: "1 / 4" }} />
              <Tool tool={{ icon: "pick", text: "拾取构件", hot: true }} />
              <Tool tool={{ icon: "batch", text: "批量选择", hot: true }} />
              <Tool tool={{ icon: "attr", text: "按属性选择", hot: true, drop: true }} />
              <Tool tool={{ icon: "find", text: "查找图元" }} />
              <Tool tool={{ icon: "filter", text: "过滤图元", off: true }} />
            </GroupBody>
            <GroupTitle>选择</GroupTitle>
          </Group>
          <ToolGroup group={groups.drawings} />
          <ToolGroup group={groups.common} />
          <ToolGroup group={groups.modify} />
          <Group $w={67}>
            <GroupBody $cols="32px 1fr">
              <DrawButton type="button" aria-label="点">
                <Icon name="point" />
              </DrawButton>
              <DrawButton type="button" aria-label="直线">
                <Icon name="line" />
              </DrawButton>
              <DrawButton type="button" aria-label="弧线">
                <Icon name="arc" />
                <Caret />
              </DrawButton>
              <DrawButton type="button" aria-label="圆" $on>
                <Icon name="circle" />
              </DrawButton>
              <DrawButton type="button" aria-label="矩形">
                <Icon name="rect" />
              </DrawButton>
            </GroupBody>
            <GroupTitle>绘图</GroupTitle>
          </Group>
          <Group $w={78}>
            <GroupBody $flush $cols="62px">
              <BigButton type="button">
                <svg width="32" height="34" fill="none" stroke={DARK} strokeWidth="2">
                  <path d="M6 6h26M6 16h24M6 26h8M12 0v31M22 0v16" />
                  <circle cx="4" cy="6" r="2" />
                  <circle cx="4" cy="16" r="2" />
                  <circle cx="4" cy="26" r="2" />
                  <path d="M18 23v-3h4M27 20h4v3M31 28v4h-4M22 32h-4v-4M24.5 20v3M24.5 29v3M18 26h3M28 26h3" stroke="#1890ff" />
                </svg>
                智能布置
                <Caret />
              </BigButton>
            </GroupBody>
            <GroupTitle>智能布置</GroupTitle>
          </Group>
          <ToolGroup group={groups.raft} />
        </Ribbon>

        <OptionBar>
          <ClippedCombo $w={81}>
            <select aria-label="工程" defaultValue="二宫-地下室">
              <option>二宫-地下室</option>
            </select>
            <Caret $color={DARK} />
          </ClippedCombo>
          <Select label="楼层" value="第-1层" focus />
          <Select label="类别" value="基础" />
          <Select label="构件类型" value="筏板基础" />
          <Select label="构件" value="FB-1" />
          <Select label="分层" value="分层1" />
          <OptionLabel $gap={6}>
            <Check />
            半径
          </OptionLabel>
          <OptionLabel $gap={1}>
            <NumberBox $w={79}>
              <input type="text" defaultValue="0" aria-label="半径" />
            </NumberBox>
            mm
          </OptionLabel>
          <Select label="偏移方式" value="不偏移" w={58} />
          <Spinner label="X" />
          <Spinner label="Y" />
        </OptionBar>

        <Main>
          <Nav>
            <PanelHead>
              <Close />
            </PanelHead>
            <NavTitle>航栏</NavTitle>
            <NavTools>
              <NavTool type="button" aria-label="列表">
                <Icon name="list" color={BLUE} />
              </NavTool>
              <NavTool type="button" aria-label="卡片">
                <Icon name="card" color={BLUE} />
              </NavTool>
            </NavTools>
            <NavScroll>
              <NavList>
                {navRoots.map((name, i) => (
                  <li key={name}>
                    <NavRoot type="button">
                      {name}
                      {i === 0 && <Icon name="stageLock" size={11} />}
                    </NavRoot>
                  </li>
                ))}
                {navChildren.map(([icon, name]) => (
                  <li key={name}>
                    <NavChild type="button" $active={name === current} onClick={() => setCurrent(name)}>
                      <Icon name={icon} color={BLUE} />
                      {name}
                    </NavChild>
                  </li>
                ))}
                <li>
                  <NavRoot type="button">其它</NavRoot>
                </li>
              </NavList>
              <ScrollThumb />
            </NavScroll>
          </Nav>

          <Side>
            <Panel>
              <PanelHead>
                <Close />
              </PanelHead>
              <Tabs>
                <Tab type="button" $active>构件列表</Tab>
                <Tab type="button">图纸管理</Tab>
              </Tabs>
              <PanelTools>
                <Tool tool={{ icon: "fresh", text: "新建", drop: true }} />
                <Tool tool={{ icon: "copy", text: "复制" }} />
                <Tool tool={{ icon: "trash", text: "删除" }} />
                <Tool tool={{ icon: "copyFloors", text: "层间复制" }} />
                <MoreButton type="button" aria-label="更多">
                  <svg width="8" height="6" fill={DARK}>
                    <path d="M0 0l4 3-4 3zM4 0l4 3-4 3z" />
                  </svg>
                </MoreButton>
              </PanelTools>
              <PanelSearch>
                <input type="text" placeholder="搜索构件..." aria-label="搜索构件" />
                <Icon name="search" color="#999" size={14} />
              </PanelSearch>
              <Tree>
                <TreeRoot type="button">
                  <Caret />
                  筏板基础
                </TreeRoot>
                <TreeLeaf type="button">FB-1</TreeLeaf>
              </Tree>
            </Panel>

            <Panel $grow>
              <PanelHead>
                <Close />
              </PanelHead>
              <Tabs>
                <Tab type="button" $active>属性列表</Tab>
                <Tab type="button">图层管理</Tab>
              </Tabs>
              <TableArea>
                <PropertyTable />
              </TableArea>
            </Panel>
          </Side>

          <Splitter>
            <SplitHandle type="button" aria-label="收起" />
          </Splitter>

          <Viewport>
            <Plan />
            <ViewTools>
              <ViewTool type="button" aria-label="动态观察">
                <Icon name="orbit" size={20} />
              </ViewTool>
              <ViewTool type="button" aria-label="三维">
                <Icon name="cube3d" size={20} />
              </ViewTool>
              <ViewTool type="button" aria-label="俯视">
                <Icon name="cubeTop" size={20} />
              </ViewTool>
              <Caret $color={DARK} />
              <ViewTool type="button" aria-label="实体">
                <Icon name="cubeFull" size={20} />
              </ViewTool>
              <Caret $color={DARK} />
              <ViewTool type="button" aria-label="全屏">
                <Icon name="extents" size={20} />
              </ViewTool>
              <ViewTool type="button" aria-label="隔离" $tight>
                <Icon name="isolate" size={20} />
              </ViewTool>
              <hr />
              <ViewTool type="button" aria-label="显示设置" $tight>
                <Icon name="display" size={20} />
              </ViewTool>
            </ViewTools>
          </Viewport>
        </Main>

        <Marks>
          <ellipse cx="261" cy="275" rx="48" ry="45" fill="none" stroke="#f316f0" strokeWidth="3" />
          <g fill="#fe3b38">
            <path d="M644 191.5L914.5 44.5 912.5 40 931 38.5 923 55.5 919 52 645 193.5z" />
            <path d="M1160.5 199L1113 350.5 1109 350 1112 370 1124 356 1120 353z" />
          </g>
        </Marks>
      </Page>
    </>
  );
}

export default App;
